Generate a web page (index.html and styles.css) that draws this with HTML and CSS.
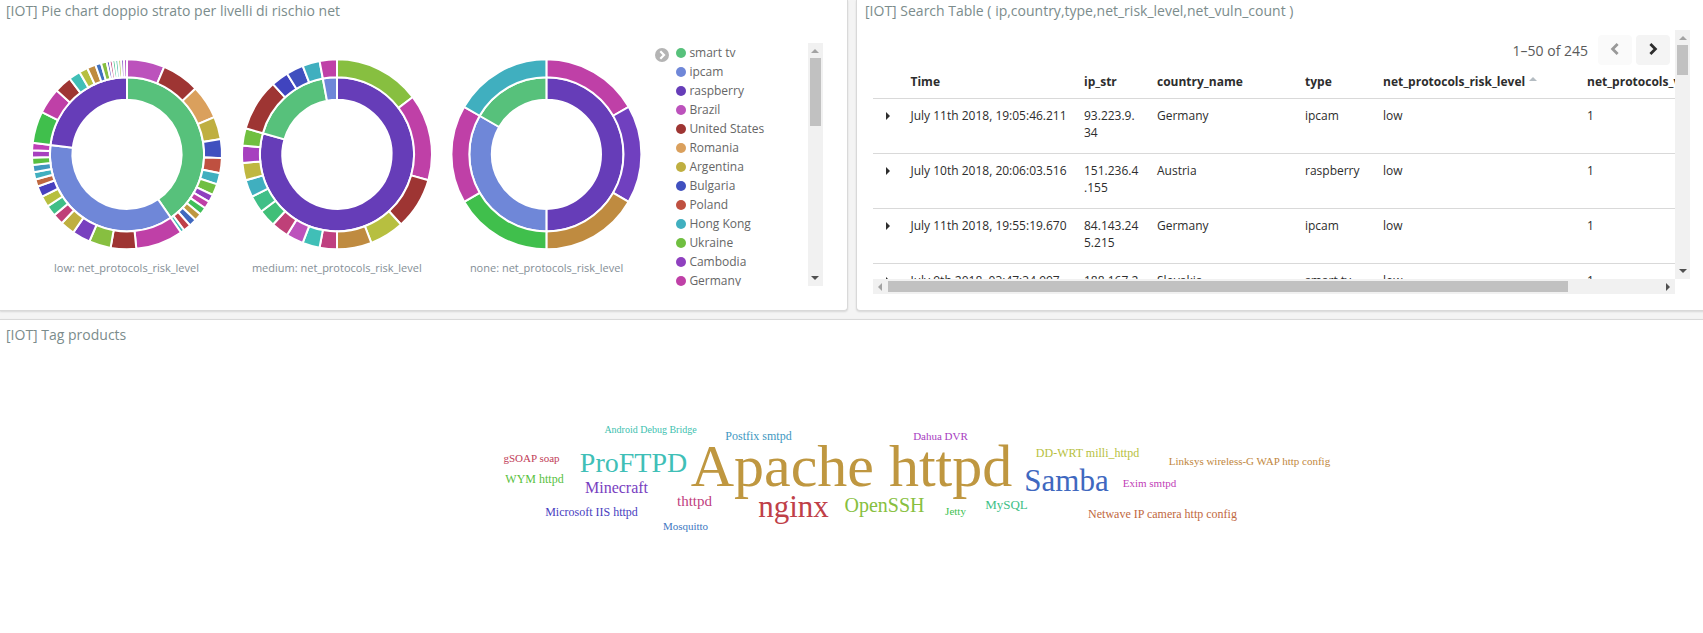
FILE: index.html
```html
<!DOCTYPE html>
<html lang="en">
<head>
<meta charset="utf-8">
<title>IOT dashboard</title>
<link rel="stylesheet" href="styles.css">
</head>
<body>
<main class="dashboard">
  <section class="panel panel-pies">
    <h2 class="panel-title">[IOT] Pie chart doppio strato per livelli di rischio net</h2>
    <div class="pies">
      <figure class="pie"><svg class="donut" id="pie-low" viewBox="-97 -97.3 194 194"></svg><figcaption>low: net_protocols_risk_level</figcaption></figure>
      <figure class="pie"><svg class="donut" id="pie-medium" viewBox="-97 -97.3 194 194"></svg><figcaption>medium: net_protocols_risk_level</figcaption></figure>
      <figure class="pie"><svg class="donut" id="pie-none" viewBox="-96.4 -97.3 194 194"></svg><figcaption>none: net_protocols_risk_level</figcaption></figure>
      <svg class="toggle" viewBox="0 0 14 14"><circle cx="7" cy="7" r="7" fill="#b4b4b4"/><path d="M5.3 3.3 9 7 5.3 10.7" fill="none" stroke="#fff" stroke-width="2.2"/></svg>
      <ul class="legend" id="legend"></ul>
      <div class="scroll-v legend-scroll"><i class="arrow up"></i><i class="thumb"></i><i class="arrow down"></i></div>
    </div>
  </section>
  <section class="panel panel-table">
    <h2 class="panel-title">[IOT] Search Table ( ip,country,type,net_risk_level,net_vuln_count )</h2>
    <div class="table-frame">
      <div class="table-view">
        <div class="pager">
          <span>1–50 of 245</span>
          <button class="page-btn disabled"><svg viewBox="0 0 10 14"><path d="M7.6 1.9 2.6 7l5 5.1" fill="none" stroke="#999" stroke-width="2.8"/></svg></button>
          <button class="page-btn"><svg viewBox="0 0 10 14"><path d="M2.4 1.9 7.4 7l-5 5.1" fill="none" stroke="#2d2d2d" stroke-width="2.8"/></svg></button>
        </div>
        <div class="row head"><span></span><span>Time</span><span>ip_str</span><span>country_name</span><span>type</span><span>net_protocols_risk_level<i class="sort"></i></span><span>net_protocols_vuln_count</span></div>
        <div class="row"><span><i class="caret"></i></span><span>July 11th 2018, 19:05:46.211</span><span>93.223.9.<br>34</span><span>Germany</span><span>ipcam</span><span>low</span><span>1</span></div>
        <div class="row"><span><i class="caret"></i></span><span>July 10th 2018, 20:06:03.516</span><span>151.236.4<br>.155</span><span>Austria</span><span>raspberry</span><span>low</span><span>1</span></div>
        <div class="row"><span><i class="caret"></i></span><span>July 11th 2018, 19:55:19.670</span><span>84.143.24<br>5.215</span><span>Germany</span><span>ipcam</span><span>low</span><span>1</span></div>
        <div class="row"><span><i class="caret"></i></span><span>July 9th 2018, 03:47:34.997</span><span>188.167.2</span><span>Slovakia</span><span>smart tv</span><span>low</span><span>1</span></div>
      </div>
      <div class="scroll-v"><i class="arrow up"></i><i class="thumb"></i><i class="arrow down"></i></div>
      <div class="scroll-h"><i class="arrow left"></i><i class="thumb"></i><i class="arrow right"></i></div>
    </div>
  </section>
  <section class="panel panel-tags">
    <h2 class="panel-title">[IOT] Tag products</h2>
    <svg class="cloud" viewBox="0 400 1703 150">
      <text x="851.5" y="486" font-size="60" fill="#bf9740">Apache httpd</text>
      <text x="793.5" y="517" font-size="31" fill="#bf4048">nginx</text>
      <text x="1066.5" y="491" font-size="31" fill="#4068bf">Samba</text>
      <text x="633.5" y="472" font-size="28" fill="#40bfb7">ProFTPD</text>
      <text x="884.5" y="512" font-size="20" fill="#87bf40">OpenSSH</text>
      <text x="616.5" y="493" font-size="16" fill="#7840bf">Minecraft</text>
      <text x="694.5" y="506" font-size="15" fill="#bf4080">thttpd</text>
      <text x="1006.5" y="509" font-size="13" fill="#40bf87">MySQL</text>
      <text x="650.5" y="433" font-size="10" fill="#40bfaf">Android Debug Bridge</text>
      <text x="758.5" y="440" font-size="12" fill="#4097bf">Postfix smtpd</text>
      <text x="531.5" y="462" font-size="11" fill="#bf4058">gSOAP soap</text>
      <text x="534.5" y="483" font-size="12" fill="#58bf40">WYM httpd</text>
      <text x="591.5" y="516" font-size="12" fill="#4840bf">Microsoft IIS httpd</text>
      <text x="685.5" y="530" font-size="11" fill="#4078bf">Mosquitto</text>
      <text x="940.5" y="440" font-size="11" fill="#a740bf">Dahua DVR</text>
      <text x="955.5" y="515" font-size="11" fill="#40bf50">Jetty</text>
      <text x="1087.5" y="457" font-size="12" fill="#b7bf40">DD-WRT milli_httpd</text>
      <text x="1249.5" y="465" font-size="11" fill="#bf8740">Linksys wireless-G WAP http config</text>
      <text x="1149.5" y="487" font-size="11" fill="#bf40b7">Exim smtpd</text>
      <text x="1162.5" y="518" font-size="12" fill="#bf6840">Netwave IP camera http config</text>
    </svg>
  </section>
</main>
<script src="charts.js"></script>
</body>
</html>
```
FILE: styles.css
```css
* { box-sizing: border-box; }
body {
  margin: 0;
  width: 1703px;
  height: 633px;
  overflow: hidden;
  background: #f4f4f4;
  color: #2d2d2d;
  font: 12px/17px "Open Sans", sans-serif;
}
.dashboard {
  display: grid;
  grid-template-columns: 848px 855px;
  grid-template-rows: 311px 330px;
  gap: 8px;
}
.panel {
  min-width: 0;
  background: #fff;
  border: 1px solid #d9d9d9;
  border-top: 0;
  border-radius: 0 0 4px 4px;
  box-shadow: 0 1px 2px rgba(0, 0, 0, .12);
}
.panel-pies { border-left: 0; border-bottom-left-radius: 0; }
.panel-table { border-right: 0; border-bottom-right-radius: 0; }
.panel-tags { grid-column: 1 / 3; border: 0; border-top: 1px solid #d9d9d9; border-radius: 0; }
.panel-title {
  margin: 0;
  padding: 1px 0 0 6px;
  font-size: 14px;
  line-height: 20px;
  font-weight: 400;
  color: #7b8c8c;
  white-space: nowrap;
}
.panel-table .panel-title { padding-left: 8px; }
.panel-tags .panel-title { padding-top: 5px; }

.pies { display: flex; align-items: flex-start; padding: 22px 0 0 22px; }
.pie { flex: none; width: 210px; margin: 14px 0 0; text-align: center; }
.pie:nth-child(2), .pie:nth-child(3) { width: 209.7px; }
.donut { display: block; width: 194px; height: 194px; margin: 0 auto; }
.pie figcaption { margin-top: 8px; font-size: 11px; line-height: 17px; color: #848e96; white-space: nowrap; }
.pie:first-child figcaption { margin-left: -1px; }
.donut path { stroke: #fff; stroke-width: 2; }
.toggle { flex: none; width: 14px; height: 14px; margin: 5px 0 0 3.5px; }
.legend {
  flex: none;
  width: 132px;
  height: 243px;
  overflow: hidden;
  margin: 0 0 0 7px;
  padding: 0;
  list-style: none;
  color: #666;
}
.legend li { display: flex; align-items: center; gap: 3.5px; height: 19px; }
.legend li::before { content: ""; width: 10px; height: 10px; border-radius: 50%; background: var(--c); }

.scroll-v { flex: none; display: flex; flex-direction: column; align-items: center; width: 15px; background: #f1f1f1; }
.scroll-h { display: flex; align-items: center; height: 15px; background: #f1f1f1; }
.legend-scroll { height: 243px; }
.thumb { background: #c1c1c1; }
.scroll-v .thumb { width: 11px; height: 30px; margin-top: 5px; }
.legend-scroll .thumb { height: 68px; }
.scroll-h .thumb { width: 680px; height: 11px; margin-left: 6px; }
.arrow { flex: none; width: 0; height: 0; border: 4px solid transparent; }
.arrow.up { border-top: 0; border-bottom-color: #a3a3a3; margin-top: 6px; }
.arrow.down { border-bottom: 0; border-top-color: #505050; margin: auto 0 6px; }
.arrow.left { border-left: 0; border-right-color: #a3a3a3; margin-left: 5px; }
.arrow.right { border-right: 0; border-left-color: #505050; margin: 0 5px 0 auto; }

.table-frame {
  display: grid;
  grid-template-columns: 802px 15px;
  grid-template-rows: 249px 15px;
  margin: 9px 0 0 16px;
}
.table-view { overflow: hidden; }
.pager { display: flex; align-items: center; justify-content: flex-end; gap: 4px; height: 30px; margin: 5px 5px 0 0; font-size: 14px; color: #5a5a5a; }
.pager span { margin: 0 6px 0 0; }
.page-btn { display: flex; align-items: flex-start; justify-content: center; width: 34px; height: 30px; padding: 7px 0 0; border: 0; border-radius: 4px; background: #f4f4f4; }
.page-btn.disabled { background: #fafafa; }
.page-btn svg { width: 10px; height: 14px; }
.row {
  display: grid;
  grid-template-columns: 29.5px 173.5px 73px 148px 78px 204px 200px;
  width: 906px;
  height: 55px;
  border-bottom: 1px solid #d9d9d9;
}
.row span { padding: 8px 0 0 8px; white-space: nowrap; }
.row.head { height: 34px; font-weight: 700; }
.caret { display: block; width: 0; height: 0; margin: 5px 0 0 5px; border: 4px solid transparent; border-left-color: #2d2d2d; border-right: 0; }
.sort { display: inline-block; margin: 0 0 5px 4px; border: 4px solid transparent; border-top: 0; border-bottom-color: #b4bcc2; }

.cloud { display: block; width: 1703px; height: 150px; margin-top: 55px; font-family: "Liberation Serif", serif; text-anchor: middle; }
```
FILE: charts.js
```javascript
const R = { hole: 54.6, mid: 77.1, outer: 95 };

function arc(r0, r1, a0, a1, color) {
  const pt = (r, a) => {
    const t = (a * Math.PI) / 180;
    return (r * Math.sin(t)).toFixed(3) + ' ' + (-r * Math.cos(t)).toFixed(3);
  };
  const big = a1 - a0 > 180 ? 1 : 0;
  return `<path fill="${color}" d="M${pt(r1, a0)}A${r1} ${r1} 0 ${big} 1 ${pt(r1, a1)}L${pt(r0, a1)}A${r0} ${r0} 0 ${big} 0 ${pt(r0, a0)}Z"/>`;
}

// Each group: [weight, colour, [[child weight, child colour], ...]]
function donut(id, groups) {
  const total = groups.reduce((s, g) => s + g[0], 0);
  let a = 0, out = '';
  for (const [w, color, kids] of groups) {
    const span = (w / total) * 360;
    out += arc(R.hole, R.mid, a, a + span, color);
    const sum = kids.reduce((s, k) => s + k[0], 0);
    let b = a;
    for (const [kw, kc] of kids) {
      const ks = (kw / sum) * span;
      out += arc(R.mid, R.outer, b, b + ks, kc);
      b += ks;
    }
    a += span;
  }
  document.getElementById(id).innerHTML = out;
}

const TV = '#57c17b', CAM = '#6f87d8', PI = '#663db8';

donut('pie-low', [
  [63, TV, [[10, '#bc52bc'], [10, '#9e3533'], [9, '#daa05d'], [6, '#bfaf40'], [5, '#4050bf'], [4, '#bf5040'], [3, '#40afbf'], [3, '#70bf40'], [2, '#8f40bf'], [2, '#bf40a7'], [2, '#40bf58'], [2, '#bf9740'], [2, '#4068bf'], [2, '#bf4048'], [1, '#40bfb7']]],
  [57, CAM, [[13, '#bf40a7'], [7, '#9e3533'], [6, '#87bf40'], [5, '#7840bf'], [4, '#bfaf40'], [3, '#bf4078'], [3, '#40bf87'], [3, '#b7bf40'], [3, '#4840bf'], [2, '#bf6840'], [2, '#40afbf'], [2, '#4097bf'], [2, '#58bf40'], [2, '#a740bf'], [2, '#bf40b7']]],
  [36, PI, [[11, '#40bf4c'], [9, '#bf40a7'], [6, '#9e3533'], [4, '#40bfb7'], [3, '#b7bf40'], [3, '#bf8b40'], [2, '#4070bf'], [2, '#87bf40'], [1, '#4840bf'], [1, '#bf4078'], [1, '#40bf87'], [1, '#40bfa0'], [1, '#9fbf40'], [1, '#7840bf'], [1, '#a740bf']]]
]);
donut('pie-medium', [
  [27, PI, [[5, '#87bf40'], [5, '#bf40a7'], [3, '#9e3533'], [2, '#b7bf40'], [2, '#bf8b40'], [1, '#bf4080'], [1, '#40bfb7'], [1, '#bc52bc'], [1, '#bf4078'], [1, '#40bf78'], [1, '#40bf87'], [1, '#40afbf'], [1, '#bfb740'], [1, '#a740bf'], [1, '#70bf40']]],
  [6, TV, [[3, '#9e3533'], [1, '#4044bf'], [1, '#4050bf'], [1, '#40afbf']]],
  [1, CAM, [[1, '#bf40a7']]]
]);
donut('pie-none', [
  [3, PI, [[1, '#bf40a7'], [1, '#7040bf'], [1, '#bf8b40']]],
  [2, CAM, [[1, '#40bf4c'], [1, '#bf40a7']]],
  [1, TV, [[1, '#40afbf']]]
]);

document.getElementById('legend').innerHTML = [
  ['smart tv', TV], ['ipcam', CAM], ['raspberry', PI], ['Brazil', '#bc52bc'], ['United States', '#9e3533'],
  ['Romania', '#daa05d'], ['Argentina', '#bfaf40'], ['Bulgaria', '#4050bf'], ['Poland', '#bf5040'],
  ['Hong Kong', '#40afbf'], ['Ukraine', '#70bf40'], ['Cambodia', '#8f40bf'], ['Germany', '#bf40a7']
].map(([name, c]) => `<li style="--c:${c}">${name}</li>`).join('');
```
